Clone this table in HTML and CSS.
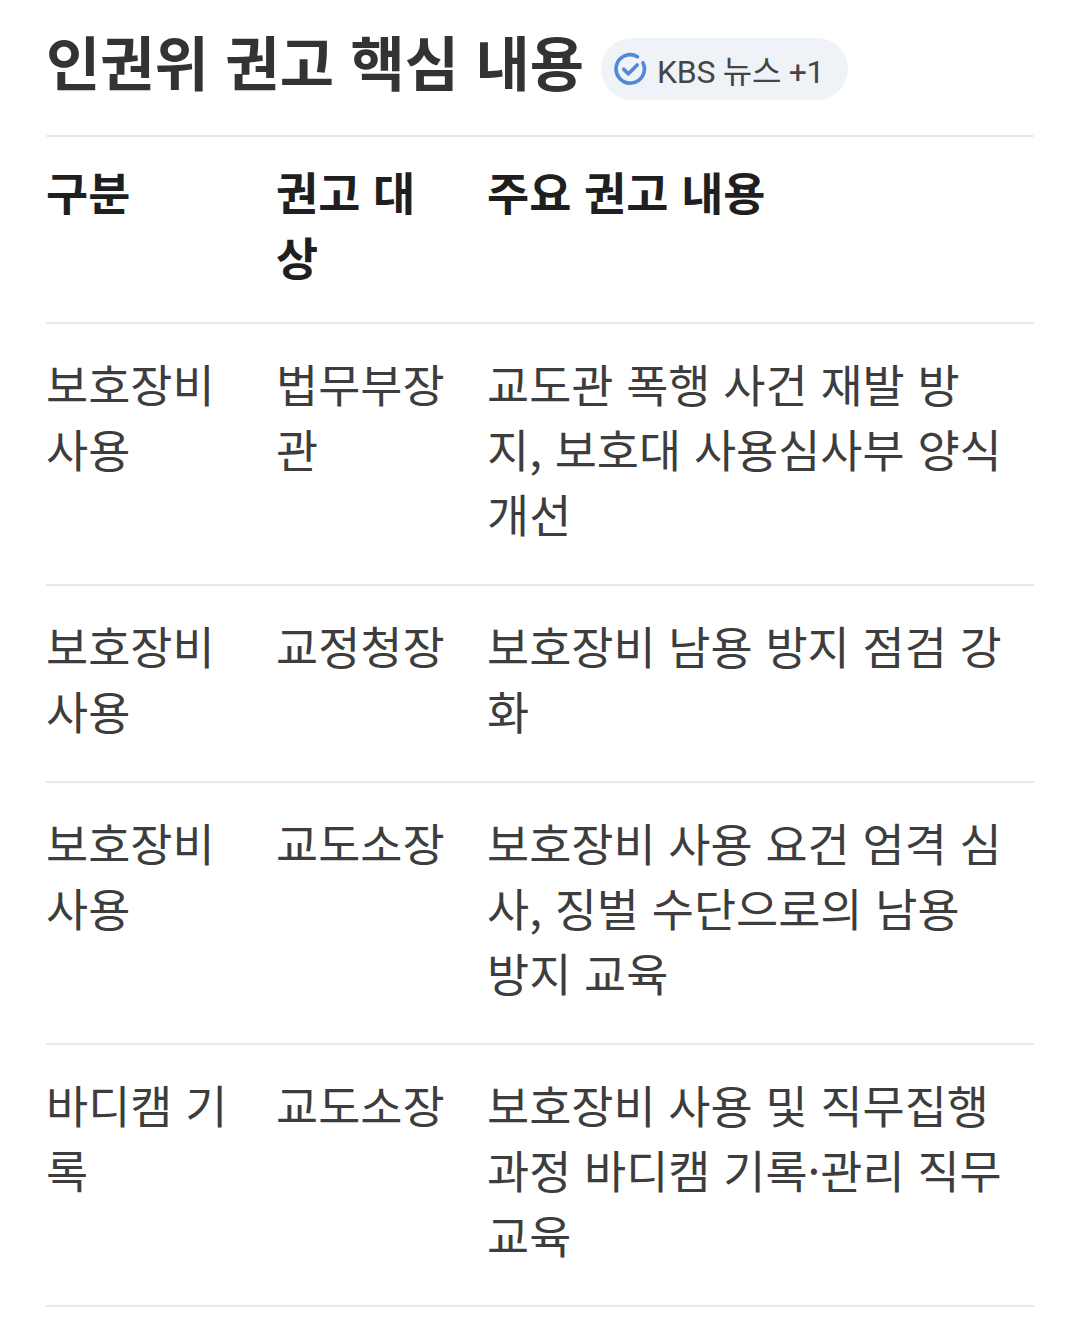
FILE: index.html
```html
<!DOCTYPE html>
<html lang="ko">
<head>
<meta charset="utf-8">
<link rel="stylesheet" href="styles.css">
</head>
<body>
<div class="page">
  <div class="title-row">
    <h1 class="title">인권위 권고 핵심 내용</h1>
    <div class="badge">
      <svg class="badge-icon" viewBox="0 0 32 32" width="36" height="36">
        <path d="M27.6 10.6 A12.6 12.6 0 1 1 22.6 5.1" fill="none" stroke="#4f8ad9" stroke-width="3.2" stroke-linecap="round"/>
        <path d="M10.4 16.2 L14.6 20.3 L22.4 12.4" fill="none" stroke="#4f8ad9" stroke-width="3.2" stroke-linecap="round" stroke-linejoin="round"/>
      </svg>
      <span class="badge-text">KBS 뉴스 +1</span>
    </div>
  </div>
  <div class="table">
    <div class="row head">
      <div class="cell c1">구분</div>
      <div class="cell c2">권고 대상</div>
      <div class="cell c3">주요 권고 내용</div>
    </div>
    <div class="row">
      <div class="cell c1">보호장비 사용</div>
      <div class="cell c2">법무부장관</div>
      <div class="cell c3">교도관 폭행 사건 재발 방지, 보호대 사용심사부 양식 개선</div>
    </div>
    <div class="row">
      <div class="cell c1">보호장비 사용</div>
      <div class="cell c2">교정청장</div>
      <div class="cell c3">보호장비 남용 방지 점검 강화</div>
    </div>
    <div class="row">
      <div class="cell c1">보호장비 사용</div>
      <div class="cell c2">교도소장</div>
      <div class="cell c3">보호장비 사용 요건 엄격 심사, 징벌 수단으로의 남용 방지 교육</div>
    </div>
    <div class="row">
      <div class="cell c1">바디캠 기록</div>
      <div class="cell c2">교도소장</div>
      <div class="cell c3">보호장비 사용 및 직무집행 과정 바디캠 기록·관리 직무 교육</div>
    </div>
  </div>
</div>
</body>
</html>
```

FILE: styles.css
```css
html, body {
  margin: 0;
  padding: 0;
  background: #ffffff;
}
body {
  font-family: "Noto Sans CJK KR", "Noto Sans", sans-serif;
  color: #3a3a3a;
}
.page {
  padding: 26px 46px 0 46px;
}
.title-row {
  display: flex;
  align-items: flex-start;
  gap: 17px;
}
.title {
  margin: 0;
  font-size: 59px;
  font-weight: 700;
  color: #333333;
  line-height: 70px;
}
.badge {
  display: flex;
  align-items: center;
  gap: 9px;
  height: 62px;
  padding: 0 24px 0 11px;
  border-radius: 31px;
  background: #eff2f7;
  margin-top: 12px;
}
.badge-icon {
  flex: none;
}
.badge-text {
  font-family: "Roboto", "Noto Sans CJK KR", sans-serif;
  font-size: 32px;
  color: #454545;
  letter-spacing: -0.3px;
}
.table {
  margin-top: 35px;
  border-top: 2px solid #e9e9e9;
}
.row {
  display: grid;
  grid-template-columns: 230px 211px 1fr;
  border-bottom: 2px solid #e9e9e9;
  padding: 27px 0 38px;
}
.row.head {
  padding: 22px 0 33px;
}
.cell {
  font-size: 45.8px;
  line-height: 65px;
  padding-right: 36px;
  color: #3d3d3d;
}
.c3 {
  padding-right: 28px;
}
.head .cell {
  font-weight: 700;
  color: #1f1f1f;
}
```
